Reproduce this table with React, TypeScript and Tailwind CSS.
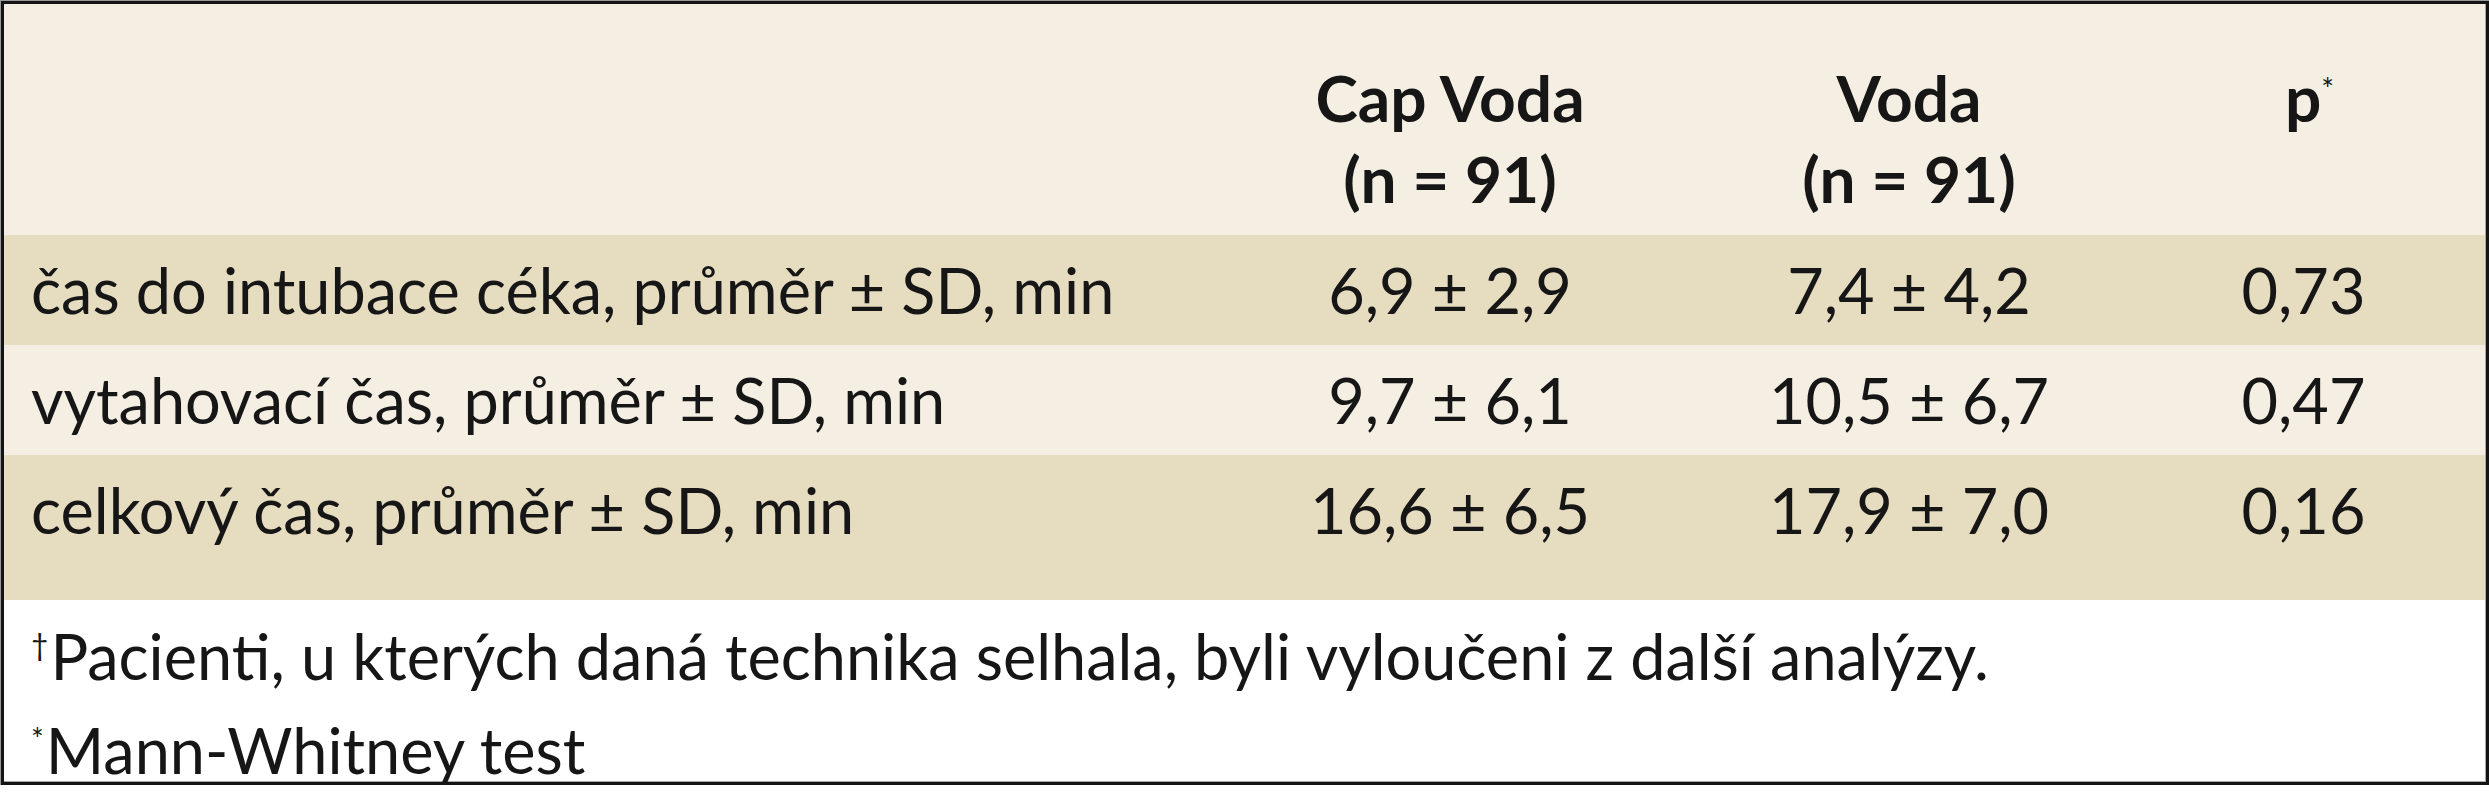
import React from "react";

const rows = [
  { label: "čas do intubace céka, průměr ± SD, min", a: "6,9 ± 2,9", b: "7,4 ± 4,2", p: "0,73", dark: true, extra: false },
  { label: "vytahovací čas, průměr ± SD, min", a: "9,7 ± 6,1", b: "10,5 ± 6,7", p: "0,47", dark: false, extra: false },
  { label: "celkový čas, průměr ± SD, min", a: "16,6 ± 6,5", b: "17,9 ± 7,0", p: "0,16", dark: true, extra: true },
];

const grid = "grid grid-cols-[1216px_460px_458px_1fr]";

export default function App() {
  return (
    <div className="w-[2489px] h-[800px] bg-white text-[#161616]" style={{ fontFamily: "Lato, 'Open Sans', sans-serif" }}>
      <div className="border-l border-t border-[#9a9a9a]">
        <div className="border-[3px] border-[#141414]">
          <div className="border-r border-b border-[#a8a8a8]">
            <div className={`${grid} bg-[#f4efe2] h-[231px] pt-[53px] text-[64px] leading-[81px] font-bold`}>
              <div />
              <div className="text-center">Cap Voda<br />(n = 91)</div>
              <div className="text-center">Voda<br />(n = 91)</div>
              <div className="text-center pr-[16px]">
                <span className="relative left-[6px]">
                  p<span className="text-[30px] font-normal relative top-[-22px]">*</span>
                </span>
              </div>
            </div>
            {rows.map((r, i) => (
              <div
                key={i}
                className={`${grid} ${r.dark ? "bg-[#e6dcbf]" : "bg-[#f4efe2]"} ${r.extra ? "h-[145px]" : "h-[110px]"} text-[63px] leading-[110px]`}
              >
                <div className="pl-[27px] whitespace-nowrap">{r.label}</div>
                <div className="text-center">{r.a}</div>
                <div className="text-center">{r.b}</div>
                <div className="text-center pr-[16px]">{r.p}</div>
              </div>
            ))}
            <div className="bg-white h-[181px] pt-[15px] pl-[27px] text-[63px] leading-[82px]">
              <div className="whitespace-nowrap">
                <span className="text-[30px] relative top-[-24px] mr-[2px]">†</span>Pacienti, u kterých daná technika selhala, byli vyloučeni z další analýzy.
              </div>
              <div className="whitespace-nowrap">
                <span className="text-[30px] relative top-[-24px] mr-[2px]">*</span>Mann-Whitney test
              </div>
            </div>
          </div>
        </div>
      </div>
    </div>
  );
}
